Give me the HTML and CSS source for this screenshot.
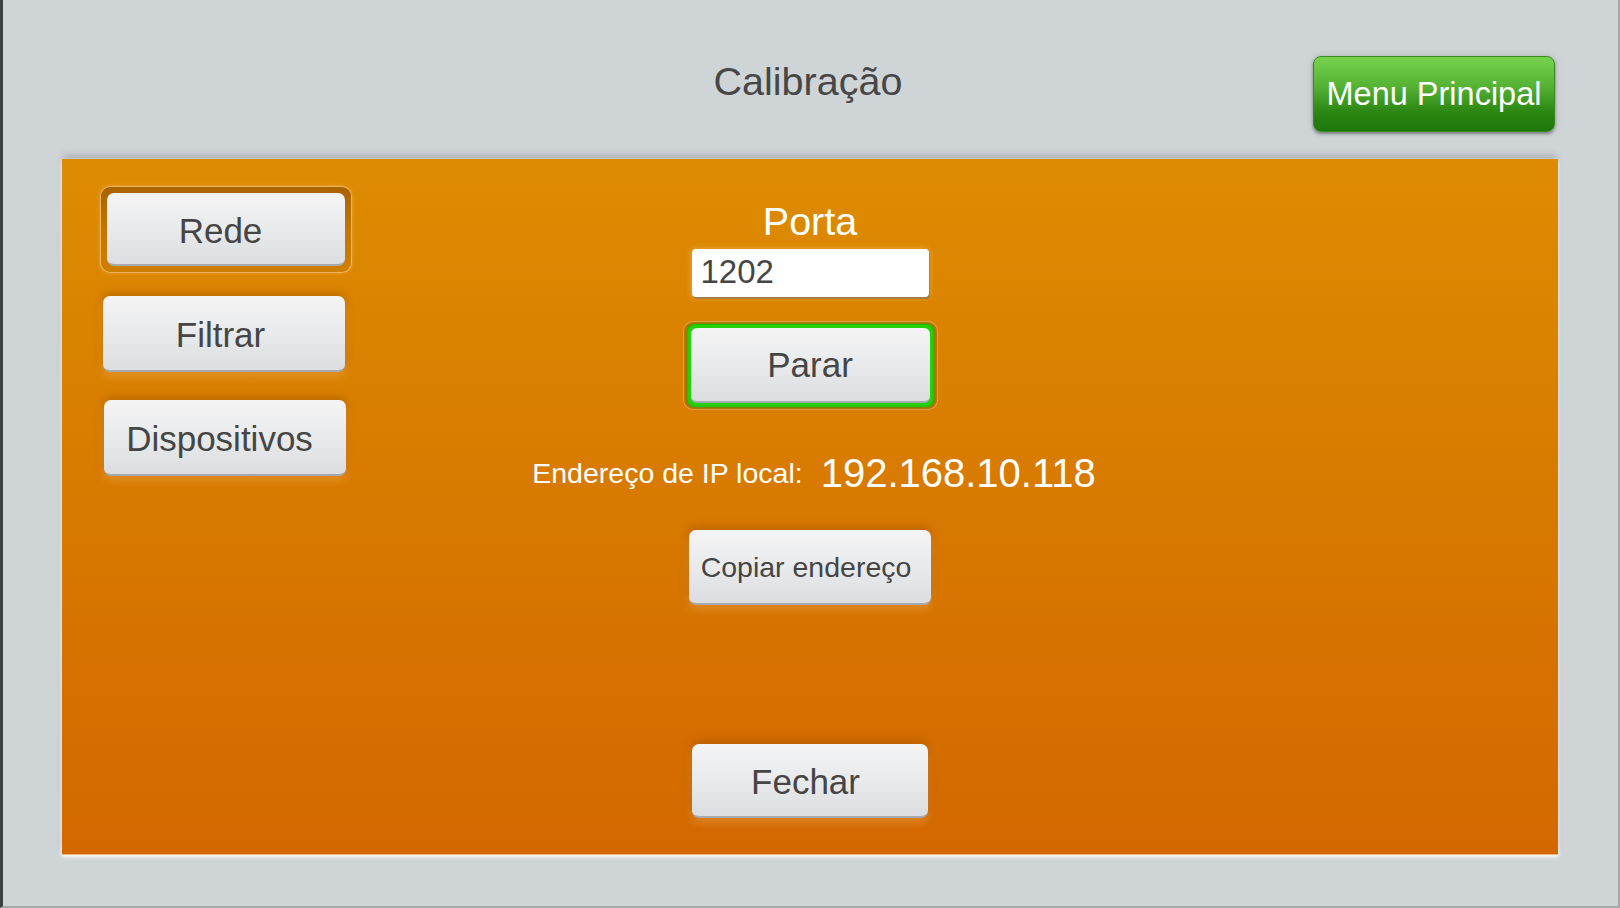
FILE: index.html
```html
<!DOCTYPE html>
<html lang="pt">
<head>
<meta charset="utf-8">
<title>Calibração</title>
<link rel="stylesheet" href="styles.css">
</head>
<body>
<div class="screen">
  <header class="header">
    <div class="header-spacer"></div>
    <h1 class="title">Calibração</h1>
    <button class="menu-btn">Menu Principal</button>
  </header>
  <main class="panel">
    <nav class="side-nav">
      <div class="selected-frame"><button class="btn btn-nav">Rede</button></div>
      <button class="btn btn-nav btn-filtrar">Filtrar</button>
      <button class="btn btn-nav btn-disp">Dispositivos</button>
    </nav>
    <section class="content">
      <div class="porta-label">Porta</div>
      <div class="port-input">1202</div>
      <div class="focus-frame">
        <div class="focus-ring"><button class="btn btn-parar">Parar</button></div>
      </div>
      <div class="ip-row">
        <span class="ip-label">Endereço de IP local:</span>
        <span class="ip-value">192.168.10.118</span>
      </div>
      <button class="btn btn-copy">Copiar endereço</button>
      <button class="btn btn-close">Fechar</button>
    </section>
    <div class="side-right"></div>
  </main>
</div>
</body>
</html>
```

FILE: styles.css
```css
* { box-sizing: border-box; }
html, body {
  margin: 0;
  padding: 0;
  background: #cfd4d7;
}
body {
  font-family: "Liberation Sans", Arial, sans-serif;
  color: #464646;
}
.screen {
  width: 1620px;
  height: 908px;
  background: #cfd4d7;
  border-left: 3px solid #3d4043;
  border-right: 2px solid #a4a8ab;
  border-bottom: 2px solid #a4a8ab;
  padding: 0 60px 0 59px;
  display: flex;
  flex-direction: column;
  overflow: hidden;
}
.header {
  height: 159px;
  display: grid;
  grid-template-columns: 1fr auto 1fr;
  align-items: start;
}
.title {
  margin: 59px 0 0;
  font-size: 39.5px;
  line-height: 44px;
  font-weight: normal;
  color: #474747;
  transform: translateX(-2px);
}
.menu-btn {
  justify-self: end;
  margin: 56px 3px 0 0;
  width: 242px;
  height: 76px;
  padding: 0;
  border: 1px solid #3a8a20;
  border-radius: 8px;
  background: linear-gradient(#76d24e 0%, #55b233 40%, #2a8512 75%, #1d780a 100%);
  color: #ffffff;
  font-family: "Liberation Sans", Arial, sans-serif;
  font-size: 32.5px;
  line-height: 40px;
  box-shadow: 0 2px 3px rgba(0,0,0,0.35), 0 0 6px rgba(120,125,130,0.35);
}
.panel {
  height: 696px;
  background: linear-gradient(#dd8c02 0%, #d87b00 45%, #d36800 100%);
  display: grid;
  grid-template-columns: 300px 1fr 300px;
  box-shadow: 0 -5px 6px -1px rgba(80,85,90,0.28), 0 2px 4px rgba(255,255,255,0.9), 0 0 3px rgba(255,255,255,0.8);
  border-bottom: 1px solid #f2b27a;
}
.side-nav {
  display: flex;
  flex-direction: column;
  align-items: flex-start;
  padding: 27px 0 0 38px;
}
.btn {
  display: block;
  padding: 0;
  border: none;
  border-bottom: 2px solid #a7aaae;
  border-radius: 7px;
  background: linear-gradient(#f4f4f5 0%, #e9eaeb 50%, #dcdde0 100%);
  color: #454545;
  font-family: "Liberation Sans", Arial, sans-serif;
  font-size: 35px;
  line-height: 40px;
  text-align: center;
  box-shadow: 0 -3px 9px rgba(150,70,0,0.45), 0 4px 9px rgba(255,190,110,0.4);
}
.selected-frame {
  width: 252px;
  height: 87px;
  padding: 6px;
  border: 1px solid rgba(250,190,110,0.85);
  border-radius: 10px;
  background: linear-gradient(#a96300 0%, #c27600 50%, #cf7f00 100%);
  box-shadow: 0 0 4px rgba(255,200,120,0.4);
}
.selected-frame .btn-nav {
  width: 238px;
  height: 73px;
  margin: 0;
  box-shadow: none;
}
.btn-nav {
  width: 242px;
  height: 76px;
  padding-top: 4px;
  text-indent: -11px;
}
.btn-filtrar {
  margin: 23px 0 0 3px;
  text-indent: -7px;
}
.btn-disp {
  margin: 28px 0 0 4px;
}
.content {
  display: flex;
  flex-direction: column;
  align-items: center;
}
.porta-label {
  margin-top: 40px;
  font-size: 39.5px;
  line-height: 44px;
  color: #ffffff;
}
.port-input {
  margin-top: 6px;
  width: 237px;
  height: 48px;
  background: #ffffff;
  border-radius: 4px;
  padding: 0 9px;
  font-size: 33px;
  line-height: 46px;
  color: #454545;
  box-shadow: 1px 2px 0 rgba(110,110,110,0.55), 0 0 6px rgba(255,200,120,0.6);
}
.focus-frame {
  margin-top: 24px;
  width: 255px;
  height: 89px;
  padding: 2px 3px;
  border: 1px solid rgba(240,180,100,0.7);
  border-radius: 10px;
  background: rgba(160,90,0,0.35);
}
.focus-ring {
  width: 100%;
  height: 100%;
  padding: 4px;
  border-radius: 8px;
  background: #25d20a;
  box-shadow: 0 0 3px #1aa000, inset 0 0 2px #1a9a00;
}
.btn-parar {
  width: 100%;
  height: 100%;
  border-radius: 6px;
  box-shadow: none;
}
.ip-row {
  margin-top: 40px;
  height: 46px;
  display: flex;
  align-items: center;
  gap: 18px;
  color: #ffffff;
  transform: translateX(4px);
}
.ip-label {
  font-size: 28.5px;
  line-height: 46px;
}
.ip-value {
  font-size: 40px;
  line-height: 46px;
}
.btn-copy {
  margin-top: 34px;
  width: 242px;
  height: 75px;
  font-size: 28.5px;
  text-indent: -8px;
}
.btn-close {
  margin-top: 139px;
  width: 236px;
  height: 74px;
  padding-top: 3px;
  text-indent: -9px;
}
```
